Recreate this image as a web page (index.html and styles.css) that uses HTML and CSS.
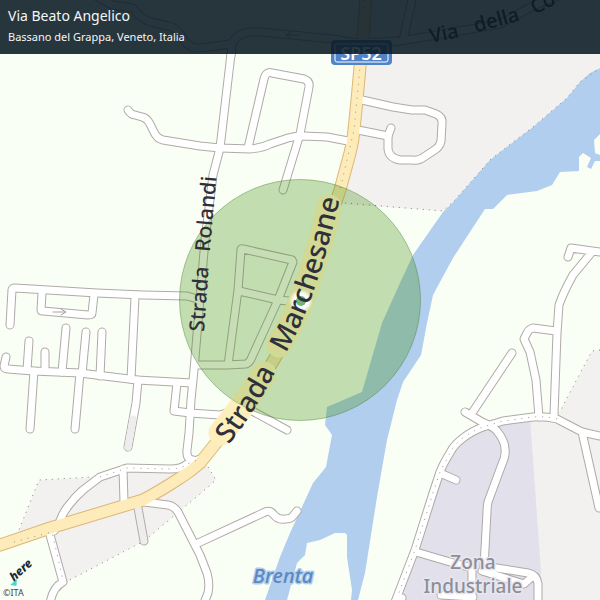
FILE: index.html
```html
<!DOCTYPE html>
<html lang="en">
<head>
<meta charset="utf-8">
<title>Via Beato Angelico</title>
<link rel="stylesheet" href="styles.css">
</head>
<body>
<main class="map-card">
  <svg class="map" viewBox="0 0 600 600" role="img" aria-label="Street map around Via Beato Angelico">
    <defs>
      <radialGradient id="glow">
        <stop offset="0.6" stop-color="#fff"/>
        <stop offset="1" stop-color="#fff" stop-opacity="0"/>
      </radialGradient>
      <g id="streets">
        <path d="M128 110Q131 115 135 115L142 117Q147 118 150 124L155 134Q158 139 163 140L200 146L220 148L250 149Q262 148 270 144L288 138Q295 136 303 136L327 137L348 141"/>
        <path d="M96 -4L112 5L133 8Q140 20 155 23L172 27Q180 32 184 40Q190 49 200 48L230 44"/>
        <path d="M231 56L232 44Q236 34 250 32L260 32L333 39L362 44"/>
        <path d="M231 54L220 148L213 175L205 240L199 310L194 370L191 400L189 433L187 450Q186 459 193 460"/>
        <path d="M248 148L264 79Q266 71 272 73L304 79Q310 81 309 87L300 134L283 190"/>
        <path d="M362 100L393 107L412 110L425 110L436 114Q443 117 442 124L441 141Q440 146 436 149L424 157Q419 161 412 160L400 160Q389 158 388 149L388 136L391 128"/>
        <path d="M358 130L388 136"/>
        <path d="M365 43L400 41L430 36L500 24L535 5L600 -20M403 40L412 0"/>
        <path d="M195 365L227 365L246 364Q249 363 251 359L278 300L293 262L292 260L243 249Q241 248 241 250L238 290L228 365M239 291L278 300L300 302"/>
        <path d="M177 383L174 411L190 413L220 415L245 407L287 430"/>
        <path d="M568 257L571 248L600 252M592 252L573 275Q563 293 559 305L557 333L554 415"/>
        <path d="M556 331L533 328Q529 329 527 333L524 339L530 352L536 380L539 417"/>
        <path d="M512 353L472 413M465 412L482 422Q494 427 497 431Q505 441 505 449Q506 456 502 464L488 502Q487 507 487 512L484 567"/>
        <path d="M600 436L582 432L557 419Q545 416 533 417L503 421L483 427Q472 431 463 438Q454 445 451 451Q443 464 440 472L433 493L415 550L395 602"/>
        <path d="M440 473L456 480M582 432L599 508M416 552L450 562L472 568L472 596M441 595L473 597M402 598L396 610"/>
        <path d="M482 571L524 584L533 576M484 566L528 573Q537 575 538 584L538 604"/>
        <path d="M54 531L60 521Q63 512 69 505Q75 497 83 490L100 477L127 468L170 469Q182 469 187 464L200 459M123 469L124 502"/>
        <path d="M144 502L168 505Q174 506 178 512L200 555L207 573Q210 583 208 593L204 603M196 544L263 513Q270 509 274 515Q278 520 285 519Q291 519 293 516L297 511"/>
        <path d="M50 535L63 582Q52 588 50 604"/>
        <path d="M10 325L12 290Q12 288 15 288L97 293L143 295L187 296L201 300"/>
        <path d="M42 293L41 310Q41 311 43 311L88 315Q92 315 92 313L94 295M135 297L131 379"/>
        <path d="M6 357L4 366Q4 369 8 369L33 371L80 373L137 380L192 383"/>
        <path d="M29 341L27 370M45 352L45 371M66 328L62 372M86 332L82 374M102 332L100 376M34 371L30 429M80 373L75 429M138 380L136 403L128 447"/>
      </g>
      <path id="provincial" d="M366 -5L363 40L360 67L357 100L354 130Q353 142 350 153L340 190L329 222L314 278Q307 302 293 325L275 358Q260 384 243 406L216 443L200 463Q190 472 180 478Q160 491 143 500L50 528L0 545L-10 548"/>
      <path id="band" d="M221 433Q243 407 264 374M279 345Q308 299 329 207"/>
      <path id="line-marchesane" d="M230 443Q254 413 275 373L286 352Q318 300 344 180"/>
      <path id="line-rolandi" d="M204 332L210 250L218 160"/>
      <path id="line-via" d="M431 43L460 37L478 32L522 20Q540 13 575 -7"/>
    </defs>

    <rect class="land" width="600" height="600"/>
    <path class="urban" d="M365 0H600V68L590 73L580 82L567 98L533 127L512 143L490 160L455 200L443 211L340 204L354 130Z"/>
    <path class="urban" d="M600 350L592 351L568 396L556 418L528 419L541 571L534 600H600Z"/>
    <path class="urban" d="M17 535L39 480L100 477L127 468L187 464L205 462L216 480L200 494L144 541L64 583L50 532Z"/>
    <path class="industrial" d="M530 418L503 421L463 438L440 472L415 550L395 600H538L541 571Z"/>
    <path class="water" d="M600 68L590 73L580 82L567 98L533 127L512 143L490 160L455 200L443 212L413 255L400 283L382 323L362 392L327 407L325 425L332 435L326 467L313 483L290 533L280 557L265 600H287L297 563L305 555L307 543L320 540L335 533H345L347 535V557L352 590L351 600H358L365 573L377 497L387 440L397 400L403 382L421 355L427 323L433 295L453 258L485 209H493L507 195L537 191L552 185L560 172L579 171V157L583 153L591 158L587 167L591 169L595 161H600V155L595 153L594 140L600 134Z"/>
    <g class="border">
      <path d="M345 203L443 211L455 200L490 160L512 143L533 127L567 98L580 82L600 68"/>
      <path d="M600 350L592 351L568 396L560 412"/>
      <path d="M17 535L39 480L92 477M205 462L216 480L200 494L144 541L64 583"/>
    </g>

    <path class="casing" d="M138 508L144 541"/>
    <use href="#streets" class="casing"/>
    <use href="#provincial" class="main-casing"/>
    <path class="track" d="M138 508L144 541"/>
    <use href="#streets" class="fill"/>
    <path class="track" d="M133 419L128 447"/>
    <use href="#provincial" class="main-fill"/>
    <g class="dots">
      <path d="M365 0L360 67L354 130L340 190"/>
      <path d="M557 419Q545 416 533 417L503 421L483 427Q472 431 463 438Q454 445 451 451L440 472L433 493L415 550L397 598"/>
      <path d="M100 477L127 468L170 469Q182 469 187 464L200 459M14 542L52 532L63 580"/>
    </g>
    <path class="oneway" d="M53 312H65M61 309L66 312L61 315M299 35H287M291 32L286 35L291 38"/>

    <use href="#band" class="label-band"/>
    <circle class="radius" cx="300" cy="300" r="120.5"/>
    <use href="#band" class="label-band label-band-top"/>
    <circle cx="301" cy="301" r="12" fill="url(#glow)"/>
    <circle class="pin" cx="301" cy="301" r="5"/>

    <g class="street-label street-small">
      <text><textPath href="#line-rolandi" startOffset="0">Strada</textPath></text>
      <text><textPath href="#line-rolandi" startOffset="80">Rolandi</textPath></text>
    </g>
    <g class="street-label street-side">
      <text><textPath href="#line-via" startOffset="0">Via</textPath></text>
      <text><textPath href="#line-via" startOffset="46">della</textPath></text>
      <text><textPath href="#line-via" startOffset="108">Co</textPath></text>
    </g>
    <g class="street-label street-large">
      <text><textPath href="#line-marchesane" startOffset="-2">Strada</textPath></text>
      <text><textPath href="#line-marchesane" startOffset="106">Marchesane</textPath></text>
    </g>

    <rect class="shield" x="331" y="40" width="61" height="25" rx="4"/>
    <rect class="shield-line" x="335" y="44" width="53" height="18" rx="2"/>
    <text class="shield-text" x="361" y="60">SP52</text>

    <text class="river-label" x="283" y="583">Brenta</text>
    <text class="area-label" x="473" y="569">Zona</text>
    <text class="area-label" x="473" y="593">Industriale</text>

    <g transform="translate(11 583) rotate(-42)">
      <path fill="#48dad0" d="M-2 1H7L2 6Z"/>
      <text class="brand" x="3" y="1">here</text>
    </g>
    <text class="copyright" x="3" y="596">©ITA</text>
  </svg>
  <header class="caption">
    <h1 class="title">Via Beato Angelico</h1>
    <p class="subtitle">Bassano del Grappa, Veneto, Italia</p>
  </header>
</main>
</body>
</html>
```
FILE: styles.css
```css
body {
  margin: 0;
  font-family: "Noto Sans", sans-serif;
}

.map-card {
  position: relative;
}

.map {
  display: block;
  width: 100%;
}

.caption {
  position: absolute;
  top: 0;
  left: 0;
  right: 0;
  padding: 5px 8px 7px;
  background: rgba(9, 25, 35, 0.88);
  color: #f4f6f7;
}

.title {
  margin: 0;
  font-size: 14px;
  font-weight: 400;
  line-height: 21px;
}

.subtitle {
  margin: 0;
  font-size: 11px;
  line-height: 21px;
}

.land { fill: #f9fff5; }
.urban { fill: #f3f1f0; }
.industrial { fill: #e1e0eb; }
.water { fill: #b1ceee; }

.casing,
.fill,
.track,
.main-casing,
.main-fill,
.border,
.dots,
.oneway,
.label-band {
  fill: none;
  stroke-linecap: round;
  stroke-linejoin: round;
}

.casing {
  stroke: #b0aaa7;
  stroke-width: 9px;
}

.fill {
  stroke: #fff;
  stroke-width: 7px;
}

.track {
  stroke: #eeecec;
  stroke-width: 7px;
}

.main-casing {
  stroke: #dcb778;
  stroke-width: 13px;
}

.main-fill {
  stroke: #fdebb9;
  stroke-width: 11px;
}

.border {
  stroke: #858080;
  stroke-width: 1px;
  stroke-linecap: butt;
  stroke-dasharray: 1 5;
}

.dots {
  stroke: #99938c;
  stroke-width: 1px;
  stroke-linecap: butt;
  stroke-dasharray: 1 6;
}

.oneway {
  stroke: #a5a0a5;
  stroke-width: 1px;
}

.label-band {
  stroke: #fdefbd;
  stroke-width: 25px;
}

.label-band-top {
  opacity: 0.25;
}

.street-label {
  fill: #30303a;
  font-weight: 500;
}

.street-small {
  font-size: 21px;
}

.street-side {
  font-size: 20px;
}

.street-large {
  font-size: 28px;
}

.radius {
  fill: rgba(66, 141, 12, 0.3);
  stroke: rgba(66, 120, 40, 0.4);
  stroke-width: 1px;
}

.pin { fill: #6db477; }

.shield { fill: #5083c7; }

.shield-line {
  fill: none;
  stroke: #fff;
  stroke-width: 1px;
}

.shield-text {
  fill: #fff;
  font-size: 18px;
  font-weight: 600;
  text-anchor: middle;
}

.river-label {
  fill: #5c87c0;
  stroke: #b1ceee;
  stroke-width: 3px;
  stroke-linejoin: round;
  paint-order: stroke;
  font-size: 20px;
  font-style: italic;
  font-weight: 500;
  text-anchor: middle;
}

.area-label {
  fill: #8e8e98;
  stroke: #e9e8f0;
  stroke-width: 3px;
  stroke-linejoin: round;
  paint-order: stroke;
  font-size: 19px;
  font-weight: 500;
  text-anchor: middle;
}

.brand {
  fill: #202830;
  font-size: 12px;
  font-style: italic;
  font-weight: 800;
}

.copyright {
  fill: #444;
  font-size: 9px;
}
```
